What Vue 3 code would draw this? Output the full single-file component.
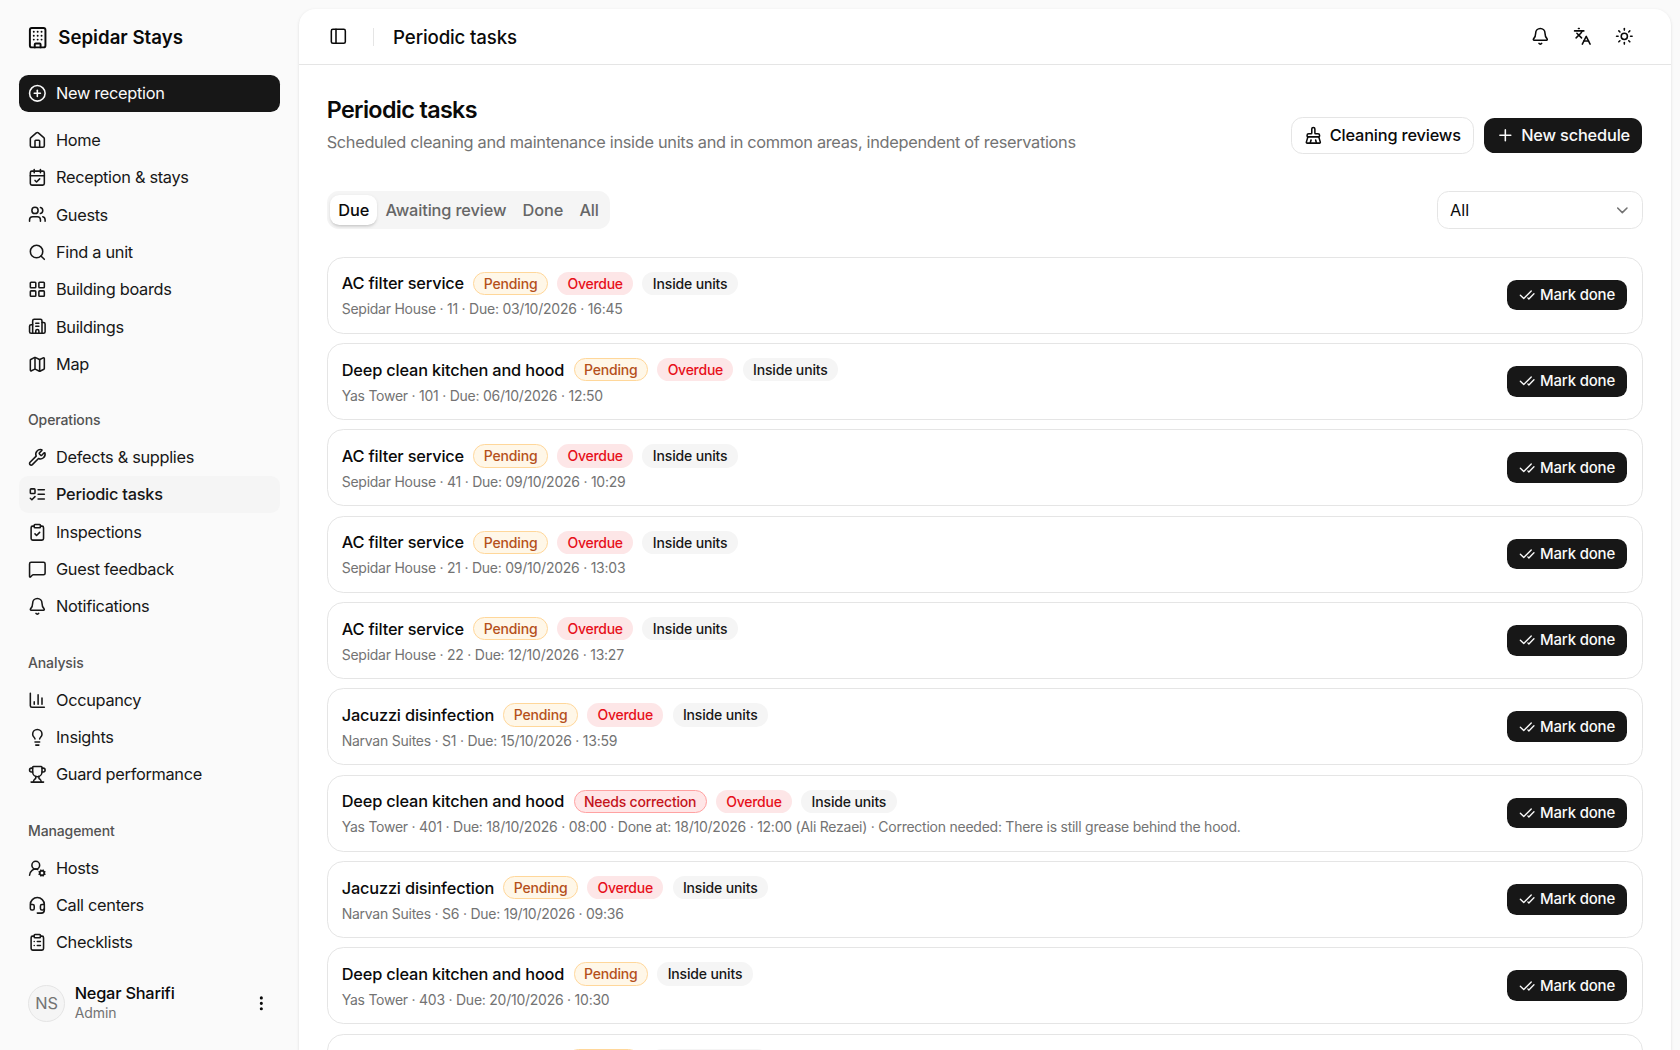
<script setup>
import { h } from 'vue'

const glyphs = {
  building: ['M6 2h12a2 2 0 0 1 2 2v16a2 2 0 0 1-2 2H6a2 2 0 0 1-2-2V4a2 2 0 0 1 2-2z', 'M9 22v-3a1 1 0 0 1 1-1h4a1 1 0 0 1 1 1v3', 'M8 6h.01M12 6h.01M16 6h.01M8 10h.01M12 10h.01M16 10h.01M8 14h.01M12 14h.01M16 14h.01'],
  circlePlus: ['M22 12a10 10 0 1 1-20 0a10 10 0 1 1 20 0', 'M8 12h8', 'M12 8v8'],
  home: ['M15 21v-8a1 1 0 0 0-1-1h-4a1 1 0 0 0-1 1v8', 'M3 10a2 2 0 0 1 .709-1.528l7-6a2 2 0 0 1 2.582 0l7 6A2 2 0 0 1 21 10v9a2 2 0 0 1-2 2H5a2 2 0 0 1-2-2z'],
  calendar: ['M8 2v4', 'M16 2v4', 'M5 4h14a2 2 0 0 1 2 2v14a2 2 0 0 1-2 2H5a2 2 0 0 1-2-2V6a2 2 0 0 1 2-2z', 'M3 10h18', 'm9 16 2 2 4-4'],
  users: ['M16 21v-2a4 4 0 0 0-4-4H6a4 4 0 0 0-4 4v2', 'M16 3.128a4 4 0 0 1 0 7.744', 'M22 21v-2a4 4 0 0 0-3-3.87', 'M13 7a4 4 0 1 1-8 0a4 4 0 1 1 8 0'],
  search: ['m21 21-4.34-4.34', 'M19 11a8 8 0 1 1-16 0a8 8 0 1 1 16 0'],
  grid: ['M4 3h5a1 1 0 0 1 1 1v5a1 1 0 0 1-1 1H4a1 1 0 0 1-1-1V4a1 1 0 0 1 1-1z', 'M15 3h5a1 1 0 0 1 1 1v5a1 1 0 0 1-1 1h-5a1 1 0 0 1-1-1V4a1 1 0 0 1 1-1z', 'M15 14h5a1 1 0 0 1 1 1v5a1 1 0 0 1-1 1h-5a1 1 0 0 1-1-1v-5a1 1 0 0 1 1-1z', 'M4 14h5a1 1 0 0 1 1 1v5a1 1 0 0 1-1 1H4a1 1 0 0 1-1-1v-5a1 1 0 0 1 1-1z'],
  buildings: ['M10 12h4', 'M10 8h4', 'M14 21v-3a2 2 0 0 0-4 0v3', 'M6 10H4a2 2 0 0 0-2 2v7a2 2 0 0 0 2 2h16a2 2 0 0 0 2-2V9a2 2 0 0 0-2-2h-2', 'M6 21V5a2 2 0 0 1 2-2h8a2 2 0 0 1 2 2v16'],
  map: ['M14.106 5.553a2 2 0 0 0 1.788 0l3.659-1.83A1 1 0 0 1 21 4.619v12.764a1 1 0 0 1-.553.894l-4.553 2.277a2 2 0 0 1-1.788 0l-4.212-2.106a2 2 0 0 0-1.788 0l-3.659 1.83A1 1 0 0 1 3 19.381V6.618a1 1 0 0 1 .553-.894l4.553-2.277a2 2 0 0 1 1.788 0z', 'M15 5.764v15', 'M9 3.236v15'],
  wrench: ['M14.7 6.3a1 1 0 0 0 0 1.4l1.6 1.6a1 1 0 0 0 1.4 0l3.106-3.105c.32-.322.863-.22.983.218a6 6 0 0 1-8.259 7.057l-7.91 7.91a1 1 0 0 1-2.999-3l7.91-7.91a6 6 0 0 1 7.057-8.259c.438.12.54.662.219.984z'],
  todo: ['M4 5h4a1 1 0 0 1 1 1v4a1 1 0 0 1-1 1H4a1 1 0 0 1-1-1V6a1 1 0 0 1 1-1z', 'm3 17 2 2 4-4', 'M13 6h8', 'M13 12h8', 'M13 18h8'],
  clipCheck: ['M9 2h6a1 1 0 0 1 1 1v2a1 1 0 0 1-1 1H9a1 1 0 0 1-1-1V3a1 1 0 0 1 1-1z', 'M16 4h2a2 2 0 0 1 2 2v14a2 2 0 0 1-2 2H6a2 2 0 0 1-2-2V6a2 2 0 0 1 2-2h2', 'm9 14 2 2 4-4'],
  message: ['M22 17a2 2 0 0 1-2 2H6.828a2 2 0 0 0-1.414.586l-2.202 2.202A.71.71 0 0 1 2 21.286V5a2 2 0 0 1 2-2h16a2 2 0 0 1 2 2z'],
  bell: ['M10.268 21a2 2 0 0 0 3.464 0', 'M3.262 15.326A1 1 0 0 0 4 17h16a1 1 0 0 0 .74-1.673C19.41 13.956 18 12.499 18 8A6 6 0 0 0 6 8c0 4.499-1.411 5.956-2.738 7.326'],
  chart: ['M3 3v16a2 2 0 0 0 2 2h16', 'M18 17V9', 'M13 17V5', 'M8 17v-3'],
  bulb: ['M15 14c.2-1 .7-1.7 1.5-2.5 1-.9 1.5-2.2 1.5-3.5A6 6 0 0 0 6 8c0 1 .2 2.2 1.5 3.5.7.7 1.3 1.5 1.5 2.5', 'M9 18h6', 'M10 22h4'],
  trophy: ['M10 14.66v1.626a2 2 0 0 1-.976 1.696A5 5 0 0 0 7 21.978', 'M14 14.66v1.626a2 2 0 0 0 .976 1.696A5 5 0 0 1 17 21.978', 'M18 9h1.5a1 1 0 0 0 0-5H18', 'M4 22h16', 'M6 9a6 6 0 0 0 12 0V3a1 1 0 0 0-1-1H7a1 1 0 0 0-1 1z', 'M6 9H4.5a1 1 0 0 1 0-5H6'],
  userCog: ['m14.305 19.53.923-.382', 'm15.228 16.852-.923-.383', 'm16.852 15.228-.383-.923', 'm16.852 20.772-.383.924', 'm19.148 15.228.383-.923', 'm19.53 21.696-.382-.924', 'm20.772 16.852.924-.383', 'm20.772 19.148.924.383', 'M2 21a8 8 0 0 1 10.434-7.62', 'M15 8a5 5 0 1 1-10 0a5 5 0 1 1 10 0', 'M21 18a3 3 0 1 1-6 0a3 3 0 1 1 6 0'],
  headset: ['M3 11h3a2 2 0 0 1 2 2v3a2 2 0 0 1-2 2H5a2 2 0 0 1-2-2v-5Zm0 0a9 9 0 1 1 18 0m0 0v5a2 2 0 0 1-2 2h-1a2 2 0 0 1-2-2v-3a2 2 0 0 1 2-2h3Z', 'M21 16v2a4 4 0 0 1-4 4h-5'],
  clipList: ['M9 2h6a1 1 0 0 1 1 1v2a1 1 0 0 1-1 1H9a1 1 0 0 1-1-1V3a1 1 0 0 1 1-1z', 'M16 4h2a2 2 0 0 1 2 2v14a2 2 0 0 1-2 2H6a2 2 0 0 1-2-2V6a2 2 0 0 1 2-2h2', 'M12 11h4', 'M12 16h4', 'M8 11h.01', 'M8 16h.01'],
  dots: ['M13 12a1 1 0 1 1-2 0a1 1 0 1 1 2 0', 'M13 5a1 1 0 1 1-2 0a1 1 0 1 1 2 0', 'M13 19a1 1 0 1 1-2 0a1 1 0 1 1 2 0'],
  panel: ['M5 3h14a2 2 0 0 1 2 2v14a2 2 0 0 1-2 2H5a2 2 0 0 1-2-2V5a2 2 0 0 1 2-2z', 'M9 3v18'],
  languages: ['m5 8 6 6', 'm4 14 6-6 2-3', 'M2 5h12', 'M7 2h1', 'm22 22-5-10-5 10', 'M14 18h6'],
  sun: ['M16 12a4 4 0 1 1-8 0a4 4 0 1 1 8 0', 'M12 2v2', 'M12 20v2', 'm4.93 4.93 1.41 1.41', 'm17.66 17.66 1.41 1.41', 'M2 12h2', 'M20 12h2', 'm6.34 17.66-1.41 1.41', 'm19.07 4.93-1.41 1.41'],
  broom: ['m16 22-1-4', 'M19 14a1 1 0 0 0 1-1v-1a2 2 0 0 0-2-2h-3a1 1 0 0 1-1-1V4a2 2 0 0 0-4 0v5a1 1 0 0 1-1 1H6a2 2 0 0 0-2 2v1a1 1 0 0 0 1 1', 'M19 14H5l-1.973 6.767A1 1 0 0 0 4 22h16a1 1 0 0 0 .973-1.233z', 'm8 22 1-4'],
  plus: ['M5 12h14', 'M12 5v14'],
  checks: ['M18 6 7 17l-5-5', 'm22 10-7.5 7.5L13 16'],
  chevron: ['m6 9 6 6 6-6'],
}

const Icon = (props) =>
  h('svg', {
    width: props.size || 16, height: props.size || 16, viewBox: '0 0 24 24', fill: 'none',
    stroke: 'currentColor', 'stroke-width': 2, 'stroke-linecap': 'round', 'stroke-linejoin': 'round',
  }, glyphs[props.name].map((d) => h('path', { d })))
Icon.props = ['name', 'size']

const groups = [
  { items: [['home', 'Home'], ['calendar', 'Reception & stays'], ['users', 'Guests'], ['search', 'Find a unit'], ['grid', 'Building boards'], ['buildings', 'Buildings'], ['map', 'Map']] },
  { label: 'Operations', items: [['wrench', 'Defects & supplies'], ['todo', 'Periodic tasks'], ['clipCheck', 'Inspections'], ['message', 'Guest feedback'], ['bell', 'Notifications']] },
  { label: 'Analysis', items: [['chart', 'Occupancy'], ['bulb', 'Insights'], ['trophy', 'Guard performance']] },
  { label: 'Management', items: [['userCog', 'Hosts'], ['headset', 'Call centers'], ['clipList', 'Checklists']] },
]
const active = 'Periodic tasks'

const AC = 'AC filter service'
const DEEP = 'Deep clean kitchen and hood'
const JAC = 'Jacuzzi disinfection'
const tasks = [
  { title: AC, status: 'Pending', overdue: true, meta: 'Sepidar House · 11 · Due: 03/10/2026 · 16:45' },
  { title: DEEP, status: 'Pending', overdue: true, meta: 'Yas Tower · 101 · Due: 06/10/2026 · 12:50' },
  { title: AC, status: 'Pending', overdue: true, meta: 'Sepidar House · 41 · Due: 09/10/2026 · 10:29' },
  { title: AC, status: 'Pending', overdue: true, meta: 'Sepidar House · 21 · Due: 09/10/2026 · 13:03' },
  { title: AC, status: 'Pending', overdue: true, meta: 'Sepidar House · 22 · Due: 12/10/2026 · 13:27' },
  { title: JAC, status: 'Pending', overdue: true, meta: 'Narvan Suites · S1 · Due: 15/10/2026 · 13:59' },
  { title: DEEP, status: 'Needs correction', overdue: true, meta: 'Yas Tower · 401 · Due: 18/10/2026 · 08:00 · Done at: 18/10/2026 · 12:00 (Ali Rezaei) · Correction needed: There is still grease behind the hood.' },
  { title: JAC, status: 'Pending', overdue: true, meta: 'Narvan Suites · S6 · Due: 19/10/2026 · 09:36' },
  { title: DEEP, status: 'Pending', overdue: false, meta: 'Yas Tower · 403 · Due: 20/10/2026 · 10:30' },
]
</script>

<template>
  <div class="app">
    <aside class="sidebar">
      <div class="brand"><Icon name="building" :size="20" /><span>Sepidar Stays</span></div>
      <button class="new-reception"><Icon name="circlePlus" /><span>New reception</span></button>
      <nav class="nav">
        <section v-for="(g, i) in groups" :key="i" class="group">
          <div v-if="g.label" class="group-label">{{ g.label }}</div>
          <a v-for="[icon, label] in g.items" :key="label" class="nav-item" :class="{ active: label === active }">
            <Icon :name="icon" /><span>{{ label }}</span>
          </a>
        </section>
      </nav>
      <div class="user">
        <div class="avatar">NS</div>
        <div class="who"><div class="name">Negar Sharifi</div><div class="role">Admin</div></div>
        <Icon name="dots" />
      </div>
    </aside>

    <main class="main">
      <header class="topbar">
        <button class="icon-btn small"><Icon name="panel" /></button>
        <span class="divider"></span>
        <span class="crumb">Periodic tasks</span>
        <div class="actions">
          <button class="icon-btn"><Icon name="bell" /></button>
          <button class="icon-btn"><Icon name="languages" /></button>
          <button class="icon-btn"><Icon name="sun" /></button>
        </div>
      </header>

      <div class="content">
        <div class="heading">
          <div>
            <h1>Periodic tasks</h1>
            <p>Scheduled cleaning and maintenance inside units and in common areas, independent of reservations</p>
          </div>
          <div class="heading-actions">
            <button class="btn outline"><Icon name="broom" /><span>Cleaning reviews</span></button>
            <button class="btn primary"><Icon name="plus" /><span>New schedule</span></button>
          </div>
        </div>

        <div class="filters">
          <div class="tabs">
            <button class="tab on">Due</button>
            <button class="tab">Awaiting review</button>
            <button class="tab">Done</button>
            <button class="tab">All</button>
          </div>
          <div class="select"><span>All</span><Icon name="chevron" /></div>
        </div>

        <div class="list">
          <article v-for="(t, i) in tasks" :key="i" class="card">
            <div class="info">
              <div class="row">
                <span class="title">{{ t.title }}</span>
                <span class="pill" :class="t.status === 'Pending' ? 'pending' : 'correction'">{{ t.status }}</span>
                <span v-if="t.overdue" class="pill overdue">Overdue</span>
                <span class="pill scope">Inside units</span>
              </div>
              <div class="meta">{{ t.meta }}</div>
            </div>
            <button class="btn primary mark"><Icon name="checks" :size="14" /><span>Mark done</span></button>
          </article>
          <!-- next card, only its top edge is above the fold -->
          <article class="card peek">
            <div class="info">
              <div class="row">
                <span class="peek-title"></span>
                <span class="pill pending peek-status"></span>
                <span class="pill scope peek-scope"></span>
              </div>
            </div>
          </article>
        </div>
      </div>
    </main>
  </div>
</template>

<style>
body { margin: 0; overflow: hidden; background: #fafafa; }
</style>

<style scoped>
.app {
  zoom: 1.166667;
  width: 1440px;
  height: 900px;
  overflow: hidden;
  display: flex;
  background: #fafafa;
  color: #0a0a0a;
  font: 400 14px/20px Inter, "Liberation Sans", sans-serif;
  letter-spacing: -0.26px;
}
* { box-sizing: border-box; }
button { font: inherit; letter-spacing: inherit; color: inherit; background: none; border: 0; padding: 0; margin: 0; }
span, p, h1, .meta, .name, .role, .group-label { white-space: nowrap; }
svg { flex: none; display: block; }

.sidebar { width: 256px; flex: none; display: flex; flex-direction: column; padding: 8px 16px; }
.brand { display: flex; align-items: center; gap: 8px; height: 32px; margin-top: 8px; padding-left: 6px; font-size: 16px; font-weight: 600; letter-spacing: 0; }
.new-reception { display: flex; align-items: center; gap: 8px; height: 32px; flex: none; margin-top: 16px; padding: 0 8px; border-radius: 8px; background: #171717; color: #fafafa; }
.nav { flex: 1; min-height: 0; overflow: hidden; margin-top: 8px; }
.group + .group { margin-top: 16px; }
.group-label { height: 32px; line-height: 32px; padding-left: 8px; font-size: 12px; font-weight: 450; letter-spacing: -0.1px; color: #525252; }
.nav-item { display: flex; align-items: center; gap: 8px; height: 32px; padding: 0 8px; border-radius: 8px; color: #171717; }
.nav-item span { padding-top: 1px; }
.nav-item.active { background: #f5f5f5; font-weight: 460; letter-spacing: -0.2px; }
.user { display: flex; align-items: center; gap: 8px; height: 48px; flex: none; padding: 0 8px; margin-bottom: 8px; }
.avatar { width: 32px; height: 32px; border-radius: 50%; border: 1px solid #e5e5e5; background: #f5f5f5; color: #737373; display: grid; place-items: center; letter-spacing: 0; }
.who { flex: 1; }
.name { font-weight: 480; line-height: 16.5px; letter-spacing: -0.18px; }
.role { font-size: 12px; line-height: 17px; color: #737373; letter-spacing: -0.05px; }

.main { flex: 1; min-width: 0; margin: 8px 8px 0 0; border-radius: 14px 14px 0 0; background: #fff; box-shadow: 0 1px 3px rgba(0,0,0,.1), 0 1px 2px -1px rgba(0,0,0,.1); overflow: hidden; }
.topbar { height: 48px; display: flex; align-items: center; padding: 0 24px 0 20px; border-bottom: 1px solid #e5e5e5; }
.icon-btn { width: 32px; height: 32px; display: grid; place-items: center; }
.icon-btn.small { width: 28px; }
.divider { width: 1px; height: 16px; background: #e5e5e5; margin: 0 16px; }
.crumb { padding-top: 1px; font-size: 16px; font-weight: 470; letter-spacing: -0.12px; }
.actions { margin-left: auto; display: flex; gap: 4px; }

.content { padding: 24px; }
.heading { display: flex; justify-content: space-between; align-items: flex-end; height: 52px; }
h1 { margin: 0 0 3px; padding-top: 1px; font-size: 20px; line-height: 28px; font-weight: 600; letter-spacing: -0.55px; }
p { margin: 0; color: #737373; }
.heading-actions { display: flex; gap: 8px; }
.btn { display: flex; align-items: center; gap: 6px; height: 32px; padding: 0 10px; border: 1px solid transparent; border-radius: 10px; background-clip: padding-box; font-weight: 470; letter-spacing: -0.14px; flex: none; }
.btn.outline { border-color: #e5e5e5; background-color: #fff; }
.btn.primary { background-color: #171717; color: #fafafa; }
.btn.mark { height: 28px; gap: 4px; font-size: 12.8px; border-radius: 9px; }
.btn.mark span { padding-top: 1px; }

.filters { display: flex; justify-content: space-between; margin-top: 32px; height: 32px; }
.tabs { display: flex; padding: 3px; border-radius: 10px; background: #f5f5f5; }
.tab { height: 26px; padding: 1px 7px 0; border-radius: 8px; font-weight: 460; letter-spacing: -0.12px; color: #666; white-space: nowrap; }
.tab.on { background: #fff; color: #0a0a0a; box-shadow: 0 1px 3px rgba(0,0,0,.1), 0 1px 2px -1px rgba(0,0,0,.1); }
.select { width: 176px; border: 1px solid #e5e5e5; border-radius: 10px; display: flex; align-items: center; justify-content: space-between; padding: 0 9px 0 10px; letter-spacing: 0; }
.select span { padding-top: 1px; }
.select svg { color: #737373; }

.list { display: flex; flex-direction: column; gap: 8px; margin-top: 24px; }
.card { display: flex; align-items: center; justify-content: space-between; height: 66px; padding: 0 12px; border: 1px solid #e5e5e5; border-radius: 14px; }
.info { align-self: flex-start; padding-top: 12px; }
.row { display: flex; align-items: center; gap: 8px; height: 20px; }
.title { padding-top: 1px; font-weight: 470; letter-spacing: -0.14px; }
.pill { height: 20px; padding: 0 8px; border: 1px solid transparent; border-radius: 10px; font-size: 12px; line-height: 18px; font-weight: 470; letter-spacing: -0.13px; }
.pending { background: #fff7e8; border-color: #ffd79a; color: #b5501b; }
.overdue { background: #fde6e7; color: #e7101a; letter-spacing: -0.22px; }
.correction { background: #ffe6e7; border-color: #ffa2a2; color: #c4141b; letter-spacing: -0.18px; }
.scope { background: #f5f5f5; color: #171717; }
.meta { margin-top: 4px; padding-top: 0.5px; font-size: 12px; line-height: 16px; letter-spacing: -0.21px; color: #737373; }
.peek-title { width: 185px; }
.peek-status { width: 63px; }
.peek-scope { width: 102px; }
</style>
